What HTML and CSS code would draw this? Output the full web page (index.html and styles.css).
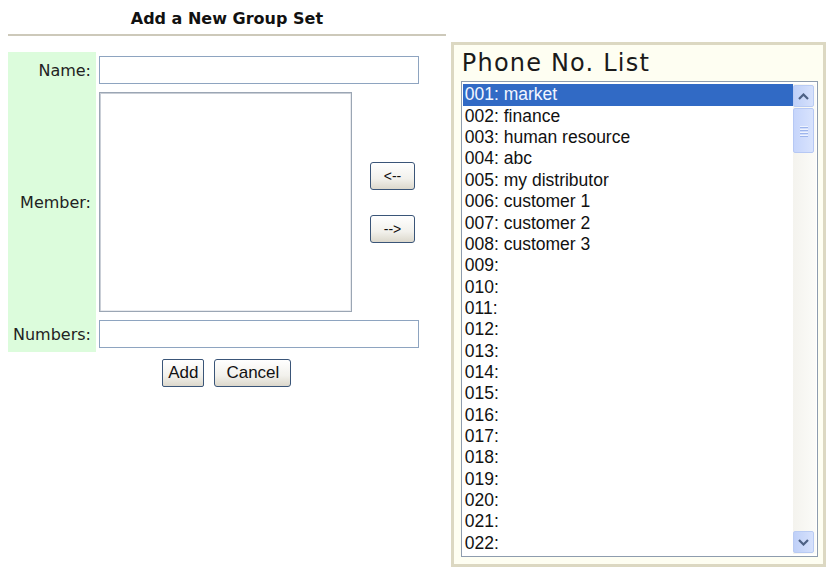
FILE: index.html
```html
<!DOCTYPE html>
<html lang="en">
<head>
  <meta charset="UTF-8">
  <title>Add a New Group Set</title>
  <link rel="stylesheet" href="styles.css">
</head>
<body>
  <div class="page">
    <div class="left">
      <h1 class="title">Add a New Group Set</h1>
      <hr class="rule">
      <div class="form">
        <label class="label" for="name">Name:</label>
        <div class="field"><input type="text" id="name" class="text-input"></div>

        <label class="label" for="member">Member:</label>
        <div class="field member-field">
          <textarea id="member" class="member-box"></textarea>
          <div class="move-buttons">
            <button class="btn move-btn">&lt;--</button>
            <button class="btn move-btn">--&gt;</button>
          </div>
        </div>

        <label class="label" for="numbers">Numbers:</label>
        <div class="field"><input type="text" id="numbers" class="text-input"></div>
      </div>
      <div class="actions">
        <button class="btn add-btn">Add</button>
        <button class="btn cancel-btn">Cancel</button>
      </div>
    </div>

    <div class="phone-panel">
      <div class="panel-title">Phone No. List</div>
      <div class="list-box">
        <ul class="phone-list">
          <li class="selected">001: market</li>
          <li>002: finance</li>
          <li>003: human resource</li>
          <li>004: abc</li>
          <li>005: my distributor</li>
          <li>006: customer 1</li>
          <li>007: customer 2</li>
          <li>008: customer 3</li>
          <li>009:</li>
          <li>010:</li>
          <li>011:</li>
          <li>012:</li>
          <li>013:</li>
          <li>014:</li>
          <li>015:</li>
          <li>016:</li>
          <li>017:</li>
          <li>018:</li>
          <li>019:</li>
          <li>020:</li>
          <li>021:</li>
          <li>022:</li>
        </ul>
        <div class="scrollbar">
          <div class="sb-btn">
            <svg width="11" height="7" viewBox="0 0 11 7"><path d="M1 6 L5.5 1.5 L10 6" fill="none" stroke="#4d6185" stroke-width="2.2"/></svg>
          </div>
          <div class="sb-thumb">
            <span></span><span></span><span></span><span></span>
          </div>
          <div class="sb-track"></div>
          <div class="sb-btn">
            <svg width="11" height="7" viewBox="0 0 11 7"><path d="M1 1 L5.5 5.5 L10 1" fill="none" stroke="#4d6185" stroke-width="2.2"/></svg>
          </div>
        </div>
      </div>
    </div>
  </div>
</body>
</html>
```

FILE: styles.css
```css
body {
  margin: 8px;
  background: #fff;
  font-family: "DejaVu Sans", Verdana, sans-serif;
  color: #1a1a1a;
}
.page {
  display: flex;
  align-items: flex-start;
  gap: 5px;
}
.left {
  width: 440px;
}
.title {
  margin: 0;
  height: 25px;
  padding-top: 1px;
  text-align: center;
  font-size: 16px;
  font-weight: bold;
  line-height: 20px;
  color: #111;
}
.rule {
  margin: 0;
  border: 0;
  border-top: 2px solid #cdc9ba;
}
.form {
  display: grid;
  grid-template-columns: 88px 1fr;
  margin-top: 16px;
}
.label {
  display: flex;
  align-items: center;
  justify-content: flex-end;
  padding-right: 5px;
  background: #dcfcdc;
  font-size: 16px;
  color: #222;
}
.field {
  padding: 4px 0 4px 3px;
  display: flex;
  align-items: center;
}
.text-input {
  width: 320px;
  height: 28px;
  box-sizing: border-box;
  border: 1px solid #8ea4c0;
  margin: 0;
}
.member-field {
  gap: 18px;
}
.member-box {
  width: 253px;
  height: 220px;
  box-sizing: border-box;
  margin: 0;
  border: 1px solid #9ba6b4;
  box-shadow: inset 1px 1px 0 #c9ced6, inset -1px -1px 0 #e8eaee;
  resize: none;
}
.move-buttons {
  display: flex;
  flex-direction: column;
  gap: 25px;
}
.btn {
  height: 28px;
  box-sizing: border-box;
  border: 1px solid #3a5578;
  border-radius: 3px;
  background: linear-gradient(#ffffff, #f2f1ec 60%, #dcd8cc);
  font-family: "Liberation Sans", Arial, sans-serif;
  font-size: 17px;
  color: #111;
  padding: 0;
}
.move-btn {
  width: 45px;
  font-size: 14px;
}
.actions {
  display: flex;
  justify-content: center;
  gap: 10px;
  margin-top: 7px;
}
.add-btn {
  width: 42px;
  border-radius: 2px;
}
.cancel-btn {
  width: 77px;
}
.phone-panel {
  margin-top: 34px;
  width: 377px;
  height: 525px;
  box-sizing: border-box;
  border: 3px solid #dcd8c2;
  background: #fefef2;
  padding: 0 5px 7px 7px;
  display: flex;
  flex-direction: column;
}
.panel-title {
  height: 37px;
  font-size: 24px;
  line-height: 36px;
  letter-spacing: 1.2px;
  color: #1a1a1a;
  padding-left: 1px;
}
.list-box {
  flex: 1;
  display: flex;
  border: 1px solid #8e9cae;
  background: #fff;
  padding: 2px 1px;
}
.phone-list {
  list-style: none;
  margin: 0;
  padding: 0;
  flex: 1;
  font-family: "Liberation Sans", Arial, sans-serif;
  font-size: 17.5px;
  color: #111;
}
.phone-list li {
  height: 21.35px;
  line-height: 21px;
  padding-left: 2px;
  white-space: nowrap;
}
.phone-list li.selected {
  background: #316ac5;
  color: #f2f6ff;
}
.scrollbar {
  width: 23px;
  display: flex;
  flex-direction: column;
  background: linear-gradient(90deg, #f4f3ee, #fbfbf8);
}
.sb-btn {
  height: 20px;
  margin: 1px 2px 1px 0;
  border: 1px solid #b9cbf3;
  border-radius: 2px;
  background: linear-gradient(90deg, #bfd0f8, #d6e1fc);
  display: flex;
  align-items: center;
  justify-content: center;
}
.sb-thumb {
  height: 43px;
  margin: 0 2px 0 0;
  border: 1px solid #b6c8f4;
  border-radius: 2px;
  background: linear-gradient(90deg, #c6d5fb, #d8e3fd);
  display: flex;
  flex-direction: column;
  align-items: center;
  justify-content: center;
  gap: 2px;
}
.sb-thumb span {
  width: 8px;
  height: 1px;
  background: #eef3fe;
  box-shadow: 0 1px 0 #9db5ec;
}
.sb-track {
  flex: 1;
}
```
